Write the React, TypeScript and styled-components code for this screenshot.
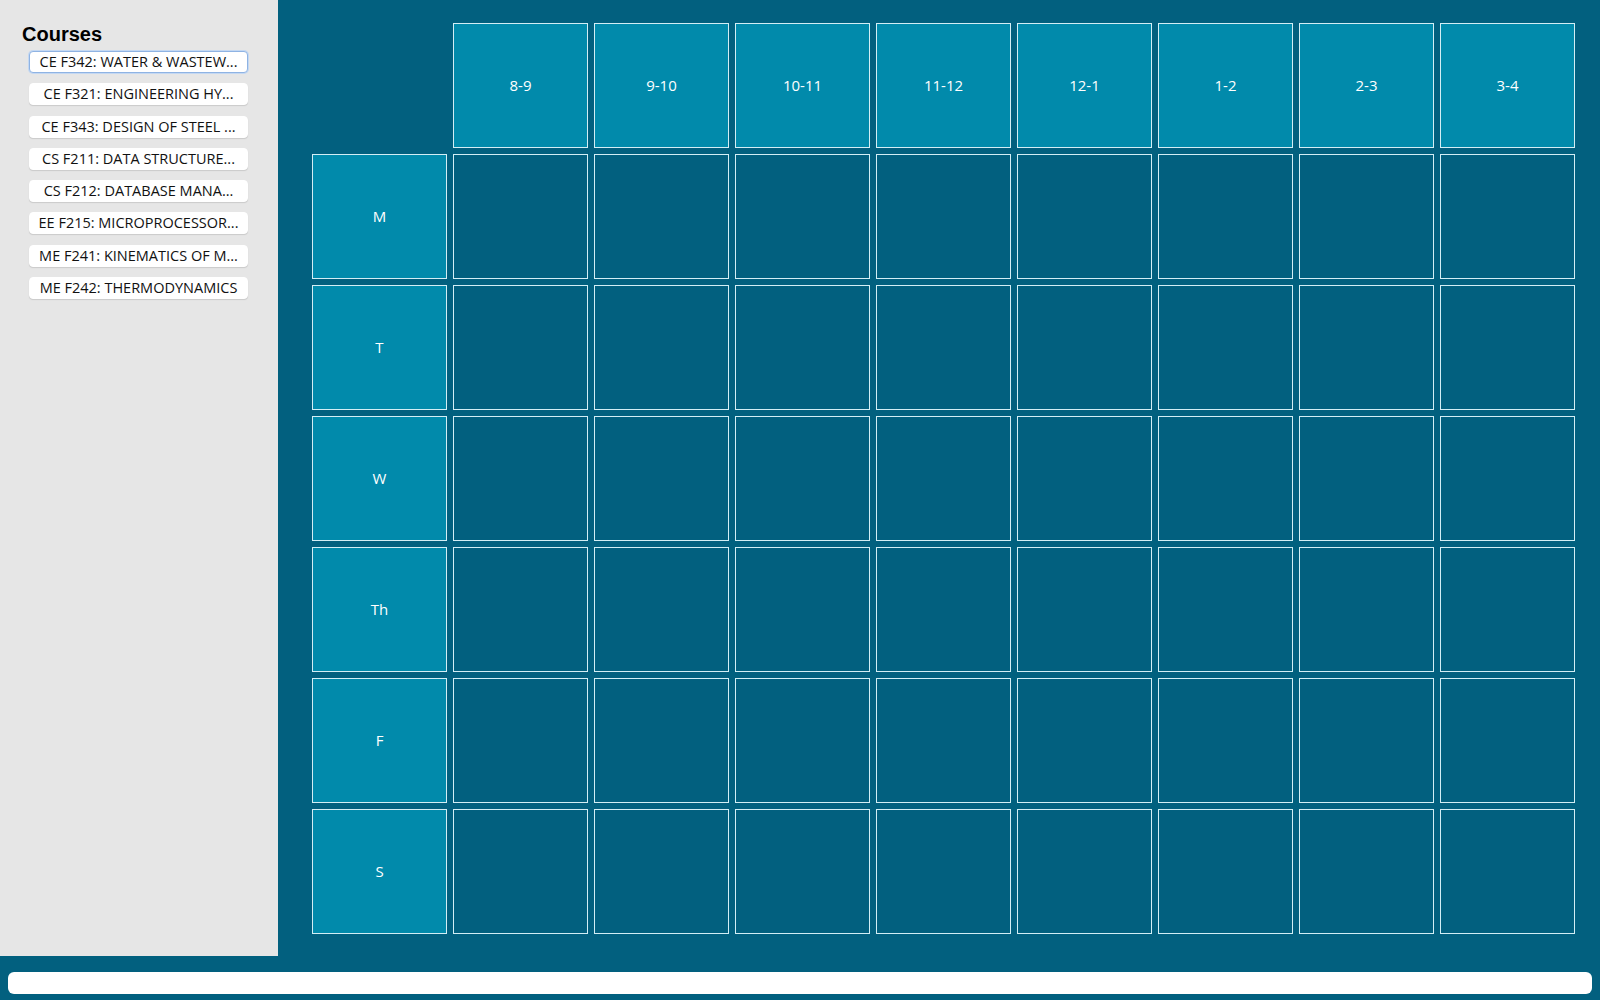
import React from "react";
import styled, { createGlobalStyle } from "styled-components";

const GlobalStyle = createGlobalStyle`
  html, body {
    margin: 0;
    padding: 0;
    background-color: #02607f;
  }
  * {
    box-sizing: border-box;
  }
`;

const Page = styled.div`
  display: flex;
  flex-direction: column;
  width: 1600px;
  height: 1000px;
  overflow: hidden;
`;

const Top = styled.div`
  display: flex;
  height: 956px;
`;

const Sidebar = styled.aside`
  width: 278px;
  background-color: #e6e6e6;
  padding: 22px 0 0 22px;
  display: flex;
  flex-direction: column;
`;

const SidebarTitle = styled.h2`
  margin: 0 0 5px 0;
  font-family: "Liberation Sans", Arial, sans-serif;
  font-size: 20px;
  font-weight: 700;
  color: #000;
  line-height: 24px;
`;

const CourseList = styled.div`
  display: flex;
  flex-direction: column;
  gap: 10.3px;
  padding-left: 7px;
`;

const CourseButton = styled.button<{ $focused?: boolean }>`
  width: 219px;
  height: 22px;
  padding: 0 3px;
  background-color: #fff;
  border: 1px solid ${(p) => (p.$focused ? "#8fb3e3" : "#fff")};
  border-radius: 4px;
  box-shadow: ${(p) =>
    p.$focused ? "0 0 0 1px #c4d8f2" : "0 1px 1px rgba(0, 0, 0, 0.12)"};
  font-family: "Open Sans", "Noto Sans", sans-serif;
  font-size: 14.5px;
  line-height: 18px;
  color: #111;
  text-align: center;
  white-space: nowrap;
  overflow: hidden;
  text-overflow: ellipsis;
  cursor: pointer;
`;

const Main = styled.main`
  flex: 1;
  padding: 23px 0 0 34px;
`;

const Timetable = styled.div`
  display: grid;
  grid-template-columns: repeat(9, 135px);
  grid-auto-rows: 125px;
  gap: 6px;
`;

const Cell = styled.div<{ $kind: "corner" | "head" | "slot" }>`
  display: flex;
  align-items: center;
  justify-content: center;
  padding-bottom: 2px;
  border: ${(p) => (p.$kind === "corner" ? "none" : "1px solid #d3eef5")};
  background-color: ${(p) => (p.$kind === "head" ? "#018aab" : "transparent")};
  color: #fff;
  font-family: "Open Sans", "Noto Sans", sans-serif;
  font-size: 15px;
`;

const Bottom = styled.div`
  padding: 16px 8px 6px 8px;
`;

const Input = styled.input`
  display: block;
  width: 100%;
  height: 22px;
  border: none;
  border-radius: 6px;
  background-color: #fff;
  outline: none;
`;

const courses = [
  "CE F342: WATER & WASTEW...",
  "CE F321: ENGINEERING HY...",
  "CE F343: DESIGN OF STEEL ...",
  "CS F211: DATA STRUCTURE...",
  "CS F212: DATABASE MANA...",
  "EE F215: MICROPROCESSOR...",
  "ME F241: KINEMATICS OF M...",
  "ME F242: THERMODYNAMICS",
];

const slots = ["8-9", "9-10", "10-11", "11-12", "12-1", "1-2", "2-3", "3-4"];
const days = ["M", "T", "W", "Th", "F", "S"];

export default function App() {
  return (
    <Page>
      <GlobalStyle />
      <Top>
        <Sidebar>
          <SidebarTitle>Courses</SidebarTitle>
          <CourseList>
            {courses.map((c, i) => (
              <CourseButton key={c} $focused={i === 0}>
                {c}
              </CourseButton>
            ))}
          </CourseList>
        </Sidebar>
        <Main>
          <Timetable>
            <Cell $kind="corner" />
            {slots.map((s) => (
              <Cell key={s} $kind="head">
                {s}
              </Cell>
            ))}
            {days.map((d) => (
              <React.Fragment key={d}>
                <Cell $kind="head">{d}</Cell>
                {slots.map((s) => (
                  <Cell key={d + s} $kind="slot" />
                ))}
              </React.Fragment>
            ))}
          </Timetable>
        </Main>
      </Top>
      <Bottom>
        <Input type="text" />
      </Bottom>
    </Page>
  );
}
